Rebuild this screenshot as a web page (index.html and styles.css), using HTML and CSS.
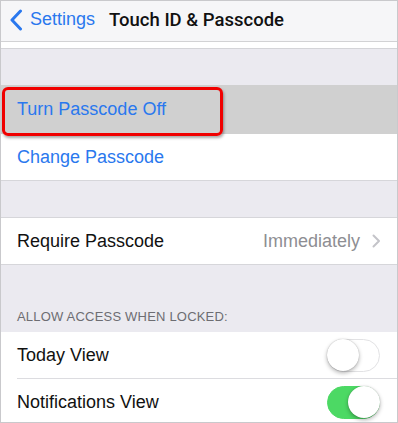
FILE: index.html
```html
<!DOCTYPE html>
<html>
<head>
<meta charset="utf-8">
<link rel="stylesheet" href="styles.css">
</head>
<body>
<div class="frame">
  <div class="nav">
    <div class="back">
      <svg class="back-chev" width="14" height="22" viewBox="0 0 14 22"><path d="M11.5 2 L3 11 L11.5 20" fill="none" stroke="#2a78ee" stroke-width="3" stroke-linecap="round" stroke-linejoin="round"/></svg>
      <span>Settings</span>
    </div>
    <div class="title">Touch ID &amp; Passcode</div>
  </div>
  <div class="strip"></div>
  <div class="gap gap-1"></div>
  <div class="row row-hl">
    <span class="blue">Turn Passcode Off</span>
    <div class="redbox"></div>
  </div>
  <div class="row row-last">
    <span class="blue">Change Passcode</span>
  </div>
  <div class="gap gap-2"></div>
  <div class="row row-last">
    <span>Require Passcode</span>
    <div class="detail">
      <span>Immediately</span>
      <svg width="9" height="14" viewBox="0 0 9 14"><path d="M1.5 1.5 L7 7 L1.5 12.5" fill="none" stroke="#c4c4c9" stroke-width="2" stroke-linecap="round" stroke-linejoin="round"/></svg>
    </div>
  </div>
  <div class="gap gap-3"><span>ALLOW ACCESS WHEN LOCKED:</span></div>
  <div class="row row-sep">
    <span>Today View</span>
    <div class="toggle"><div class="knob"></div></div>
  </div>
  <div class="row">
    <span>Notifications View</span>
    <div class="toggle on"><div class="knob"></div></div>
  </div>
</div>
</body>
</html>
```
FILE: styles.css
```css
* { box-sizing: border-box; }
html, body { margin: 0; padding: 0; }
body {
  font-family: "Liberation Sans", Arial, sans-serif;
  background: #fff;
}
.frame {
  width: 398px;
  height: 423px;
  border: 1px solid #c9c9cc;
  overflow: hidden;
  background: #ebeaf0;
}
.nav {
  height: 41px;
  background: #f6f6f8;
  border-bottom: 1px solid #d2d2d4;
  display: flex;
  align-items: center;
  padding-left: 8px;
}
.back {
  display: flex;
  align-items: center;
  color: #2a78ee;
  font-size: 18px;
  gap: 7px;
  margin-top: -3px;
}
.back-chev { flex: none; }
.title {
  margin-left: 14px;
  font-family: Roboto, "Liberation Sans", sans-serif;
  font-size: 18.5px;
  font-weight: 500;
  color: #111;
  margin-top: -3px;
}
.strip {
  height: 7px;
  background: #fff;
  border-bottom: 1px solid #d4d4d8;
}
.gap { background: #ebeaf0; }
.gap-1 { height: 36px; }
.gap-2 { height: 37px; border-bottom: 1px solid #d6d6da; }
.gap-3 {
  height: 67px;
  display: flex;
  align-items: flex-end;
  padding: 0 0 8px 16px;
  font-size: 13px;
  color: #6d6d72;
  letter-spacing: 0.2px;
}
.row {
  height: 47px;
  background: #fff;
  display: flex;
  align-items: center;
  padding: 0 16px;
  font-size: 18px;
  color: #111;
  position: relative;
  justify-content: space-between;
}
.row-hl { height: 49px; background: #d0d0d0; }
.row-last { border-bottom: 1px solid #d6d6da; }
.row-sep::after {
  content: "";
  position: absolute;
  left: 16px;
  right: 0;
  bottom: 0;
  height: 1px;
  background: #dcdce0;
}
.blue { color: #2a78ee; }
.redbox {
  position: absolute;
  left: 1px;
  top: 2px;
  width: 221px;
  height: 49px;
  border: 3.5px solid #f00000;
  border-radius: 6px;
  box-shadow: 1px 2px 3px rgba(0,0,0,0.35);
  z-index: 2;
}
.detail {
  display: flex;
  align-items: center;
  gap: 12px;
  color: #8e8e93;
  margin-right: 0;
}
.toggle {
  width: 53px;
  height: 33px;
  border-radius: 17px;
  border: 1.5px solid #e2e2e4;
  background: #fff;
  position: relative;
  margin-right: 1px;
}
.knob {
  position: absolute;
  top: -1px;
  left: -1px;
  width: 32px;
  height: 32px;
  border-radius: 50%;
  background: #fff;
  box-shadow: 0 2px 4px rgba(0,0,0,0.3), 0 0 1px rgba(0,0,0,0.3);
}
.toggle.on {
  background: #4cd964;
  border-color: #4cd964;
}
.toggle.on .knob {
  left: auto;
  right: -1px;
}
```
